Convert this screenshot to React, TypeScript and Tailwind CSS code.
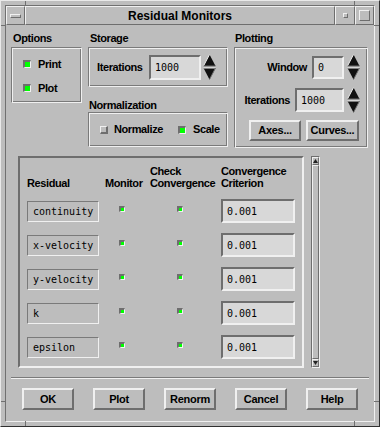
import React from 'react';

const sans = "font-['Liberation_Sans',Arial,sans-serif]";
const mono = "font-['DejaVu_Sans_Mono','Liberation_Mono',monospace]";

const raised =
  'border-2 border-t-[#f0f0f0] border-l-[#f0f0f0] border-b-[#6e6e6e] border-r-[#6e6e6e]';
const raised1 =
  'border border-t-[#f0f0f0] border-l-[#f0f0f0] border-b-[#6e6e6e] border-r-[#6e6e6e]';
const sunken =
  'border-2 border-t-[#6e6e6e] border-l-[#6e6e6e] border-b-[#f0f0f0] border-r-[#f0f0f0]';
const etched =
  'border border-t-[#7a7a7a] border-l-[#7a7a7a] border-b-[#f0f0f0] border-r-[#f0f0f0] shadow-[inset_1px_1px_0_#f0f0f0,inset_-1px_-1px_0_#7a7a7a]';

function Spinner() {
  return (
    <svg width="13" height="26" viewBox="0 0 13 26" className="shrink-0">
      <polygon points="6.5,0.5 0.5,12 12.5,12" fill="#111" />
      <line x1="6.5" y1="0.5" x2="0.5" y2="12" stroke="#ececec" />
      <line x1="0.5" y1="12" x2="12.5" y2="12" stroke="#6e6e6e" />
      <polygon points="0.5,14 12.5,14 6.5,25.5" fill="#111" />
      <line x1="0.5" y1="14" x2="12.5" y2="14" stroke="#ececec" />
      <line x1="12.5" y1="14" x2="6.5" y2="25.5" stroke="#6e6e6e" />
    </svg>
  );
}

function Field({ value, w, h }: { value: string; w: string; h: string }) {
  return (
    <div
      className={`${sunken} ${w} ${h} bg-[#d8d8d8] flex items-center pl-[4px] ${mono} text-[10px] font-normal tracking-normal text-black`}
    >
      {value}
    </div>
  );
}

// toggle with green indicator
function Toggle({ on }: { on: boolean }) {
  if (on)
    return (
      <div className="w-[8px] h-[8px] shrink-0 border-t-2 border-l-2 border-b border-r border-t-[#6e6e6e] border-l-[#6e6e6e] border-b-[#f0f0f0] border-r-[#f0f0f0] bg-[#00ff00]" />
    );
  return (
    <div className="w-[8px] h-[8px] shrink-0 border-t border-l border-b-2 border-r-2 border-t-[#f0f0f0] border-l-[#f0f0f0] border-b-[#6e6e6e] border-r-[#6e6e6e] bg-[#bdbdbd]" />
  );
}

function TinyToggle() {
  return (
    <div className="w-[6px] h-[6px] border-t-2 border-l-2 border-b border-r border-t-[#6e6e6e] border-l-[#6e6e6e] border-b-[#f0f0f0] border-r-[#f0f0f0] bg-[#00ff00]" />
  );
}

function Button({ label, w, h }: { label: string; w: string; h: string }) {
  return (
    <div
      className={`${raised} ${w} ${h} flex items-center justify-center text-[11px] font-bold tracking-[-0.3px] text-black`}
    >
      {label}
    </div>
  );
}

const residuals = ['continuity', 'x-velocity', 'y-velocity', 'k', 'epsilon'];

export default function App() {
  return (
    <div
      className={`${sans} w-[380px] h-[427px] bg-[#bdbdbd] border border-t-[#e9e9e9] border-l-[#e9e9e9] border-b-[#303030] border-r-[#303030] p-[4px] text-black relative`}
    >
      <div className="w-full h-full flex flex-col border border-t-[#707070] border-l-[#707070] border-b-[#f0f0f0] border-r-[#f0f0f0]">
        {/* title bar */}
        <div className="flex h-[19px] shrink-0">
          <div className={`${raised1} w-[19px] flex items-center justify-center`}>
            <div className={`${raised1} w-[11px] h-[4px]`} />
          </div>
          <div
            className={`${raised1} flex-1 flex items-center justify-center text-[12px] font-bold leading-none`}
          >
            Residual Monitors
          </div>
          <div className={`${raised1} w-[20px] flex items-center justify-center`}>
            <div className={`${raised1} w-[5px] h-[5px]`} />
          </div>
          <div className={`${raised1} w-[19px] flex items-center justify-center`}>
            <div className={`${raised1} w-[11px] h-[11px]`} />
          </div>
        </div>

        {/* dialog body */}
        <div className="flex-1 flex flex-col">
          {/* top groups */}
          <div className="flex gap-[6px] pl-[5px] pt-[6px] text-[11px] font-bold tracking-[-0.4px]">
            {/* Options */}
            <div className="w-[71px] flex flex-col">
              <div className="h-[14px] leading-[14px] pl-[2px] mb-[2px]">Options</div>
              <div className={`${etched} h-[56px] flex flex-col gap-[16px] pl-[11px] pt-[12px]`}>
                <div className="flex items-center gap-[7px] h-[8px]">
                  <Toggle on />
                  <span>Print</span>
                </div>
                <div className="flex items-center gap-[7px] h-[8px]">
                  <Toggle on />
                  <span>Plot</span>
                </div>
              </div>
            </div>

            {/* Storage + Normalization */}
            <div className="w-[140px] flex flex-col">
              <div className="h-[14px] leading-[14px] pl-[2px] mb-[2px]">Storage</div>
              <div className={`${etched} h-[40px] flex items-center pl-[8px]`}>
                <span className="w-[52px]">Iterations</span>
                <Field value="1000" w="w-[52px]" h="h-[25px]" />
                <div className="ml-[2px]">
                  <Spinner />
                </div>
              </div>
              <div className="h-[14px] leading-[14px] pl-[1px] mt-[11px]">Normalization</div>
              <div className={`${etched} h-[35px] flex items-center pl-[11px]`}>
                <Toggle on={false} />
                <span className="ml-[6px] w-[64px]">Normalize</span>
                <Toggle on />
                <span className="ml-[7px]">Scale</span>
              </div>
            </div>

            {/* Plotting */}
            <div className="w-[134px] flex flex-col">
              <div className="h-[14px] leading-[14px] pl-[1px] mb-[2px]">Plotting</div>
              <div className={`${etched} h-[101px] flex flex-col items-end pr-[7px] pt-[7px]`}>
                <div className="flex items-center h-[24px]">
                  <span className="mr-[5px]">Window</span>
                  <Field value="0" w="w-[32px]" h="h-[23px]" />
                  <div className="ml-[3px]">
                    <Spinner />
                  </div>
                </div>
                <div className="flex items-center h-[24px] mt-[9px]">
                  <span className="mr-[5px]">Iterations</span>
                  <Field value="1000" w="w-[49px]" h="h-[24px]" />
                  <div className="ml-[3px]">
                    <Spinner />
                  </div>
                </div>
                <div className="flex gap-[5px] mt-[8px] pr-[1px]">
                  <Button label="Axes..." w="w-[52px]" h="h-[21px]" />
                  <Button label="Curves..." w="w-[53px]" h="h-[21px]" />
                </div>
              </div>
            </div>
          </div>

          {/* residual table */}
          <div className="flex pl-[12px] mt-[8px] gap-[7px]">
            <div className={`${sunken} w-[286px] h-[212px] pl-[7px] pt-[7px]`}>
              <div className="grid grid-cols-[72px_39px_65px_74px] gap-x-[6px] text-[11px] font-bold leading-[12px] tracking-[-0.4px]">
                <div className="h-[24px] flex items-end">Residual</div>
                <div className="h-[24px] flex items-end">Monitor</div>
                <div className="h-[24px] flex flex-col justify-end">
                  <span>Check</span>
                  <span>Convergence</span>
                </div>
                <div className="h-[24px] flex flex-col justify-end">
                  <span>Convergence</span>
                  <span>Criterion</span>
                </div>
              </div>
              <div className="mt-[5px] flex flex-col">
                {residuals.map((r) => (
                  <div
                    key={r}
                    className="grid grid-cols-[72px_39px_65px_74px] gap-x-[6px] h-[34px] items-center"
                  >
                    <div
                      className={`h-[21px] border border-t-[#7a7a7a] border-l-[#7a7a7a] border-b-[#f0f0f0] border-r-[#f0f0f0] flex items-center pl-[5px] ${mono} text-[10px]`}
                    >
                      {r}
                    </div>
                    <div className="pl-[14px] mb-[5px]">
                      <TinyToggle />
                    </div>
                    <div className="pl-[27px] mb-[5px]">
                      <TinyToggle />
                    </div>
                    <Field value="0.001" w="w-[74px]" h="h-[24px]" />
                  </div>
                ))}
              </div>
            </div>

            {/* squeezed scrollbar */}
            <div className="w-[9px] h-[212px] flex flex-col border border-t-[#6e6e6e] border-l-[#6e6e6e] border-b-[#f0f0f0] border-r-[#f0f0f0]">
              <div className={`${raised1} h-[8px] flex items-center justify-center`}>
                <svg width="5" height="4" viewBox="0 0 5 4">
                  <polygon points="2.5,0 0,4 5,4" fill="#222" />
                </svg>
              </div>
              <div className={`${raised1} flex-1`} />
              <div className={`${raised1} h-[8px] flex items-center justify-center`}>
                <svg width="5" height="4" viewBox="0 0 5 4">
                  <polygon points="0,0 5,0 2.5,4" fill="#222" />
                </svg>
              </div>
            </div>
          </div>

          {/* separator */}
          <div className="mx-[5px] mt-[9px] h-[2px] border-t border-b border-t-[#7a7a7a] border-b-[#f0f0f0]" />

          {/* action buttons */}
          <div className="flex justify-center gap-[19px] mt-[9px]">
            {['OK', 'Plot', 'Renorm', 'Cancel', 'Help'].map((b) => (
              <Button key={b} label={b} w="w-[52px]" h="h-[22px]" />
            ))}
          </div>
        </div>
      </div>

      {/* window frame corner marks */}
      <div className="absolute left-[24px] top-0 w-px h-[5px] bg-[#707070]" />
      <div className="absolute right-[24px] top-0 w-px h-[5px] bg-[#707070]" />
      <div className="absolute left-[24px] bottom-0 w-px h-[5px] bg-[#707070]" />
      <div className="absolute right-[24px] bottom-0 w-px h-[5px] bg-[#707070]" />
      <div className="absolute left-0 top-[24px] h-px w-[5px] bg-[#707070]" />
      <div className="absolute right-0 top-[24px] h-px w-[5px] bg-[#707070]" />
      <div className="absolute left-0 bottom-[24px] h-px w-[5px] bg-[#707070]" />
      <div className="absolute right-0 bottom-[24px] h-px w-[5px] bg-[#707070]" />
    </div>
  );
}
